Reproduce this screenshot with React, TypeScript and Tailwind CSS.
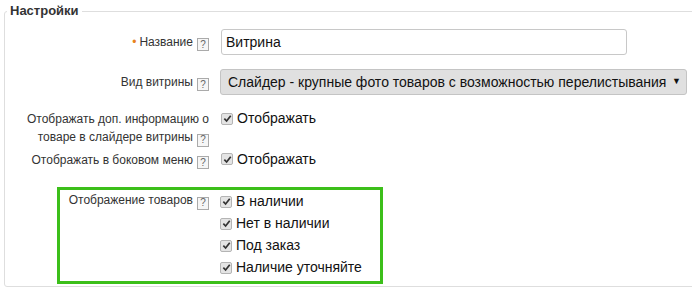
import React from "react";

const Help: React.FC = () => (
  <span className="ml-[4px] inline-flex h-[13px] w-[12px] items-center justify-center border border-[#aaa] bg-[#f6f6f6] align-[-2px] text-[10px] leading-none text-[#666]">
    ?
  </span>
);

const Check: React.FC<{ label: string }> = ({ label }) => (
  <div className="flex h-[19px] items-center whitespace-nowrap">
    <span className="mr-[4px] flex h-[12px] w-[12px] items-center justify-center rounded-[2px] border border-[#b4b4b4] bg-[#e4e4e4]">
      <svg width="9" height="9" viewBox="0 0 10 10">
        <path d="M1.5 5.2 L4 7.8 L8.6 2" fill="none" stroke="#333" strokeWidth="1.9" />
      </svg>
    </span>
    <span className="text-[14px] text-[#111]">{label}</span>
  </div>
);

const Row: React.FC<{ label: React.ReactNode; className?: string; children: React.ReactNode }> = ({
  label,
  className = "",
  children,
}) => (
  <div className={"flex " + className}>
    <div className="w-[204px] shrink-0 whitespace-nowrap text-right text-[12px] leading-[18px] text-[#333]">{label}</div>
    <div className="ml-[12px]">{children}</div>
  </div>
);

export default function App() {
  const items = ["В наличии", "Нет в наличии", "Под заказ", "Наличие уточняйте"];

  return (
    <div className="h-[294px] w-[692px] overflow-hidden bg-white [font-family:'Liberation_Sans',Arial,sans-serif]">
      <fieldset className="ml-[4px] mt-[4px] h-[283px] w-[700px] rounded-[3px] border border-[#dedede] pl-0 pt-0">
        <legend className="ml-[2px] px-[3px] text-[13px] font-bold leading-[14px] text-[#333]">Настройки</legend>

        <Row label={<><span className="mr-[3px] text-[#e8831d]">•</span>Название<Help /></>} className="mt-[11px] items-center">
          <input
            readOnly
            value="Витрина"
            className="h-[26px] w-[406px] rounded-[3px] border border-[#c8c8c8] bg-white px-[4px] text-[14px] text-[#111] outline-none"
          />
        </Row>

        <Row label={<>Вид витрины<Help /></>} className="mt-[14px] items-center">
          <div className="-ml-[1px] flex h-[26px] w-[467px] items-center justify-between whitespace-nowrap rounded-[3px] border border-[#c4c4c4] bg-[#e0e0e0] pl-[7px] pr-[5px] text-[14px] text-[#111]">
            <span>Слайдер - крупные фото товаров с возможностью перелистывания</span>
            <span className="text-[9px]">▼</span>
          </div>
        </Row>

        <Row
          label={<>Отображать доп. информацию о<br />товаре в слайдере витрины<Help /></>}
          className="mt-[15px]"
        >
          <div className="mt-[-1px]"><Check label="Отображать" /></div>
        </Row>

        <Row label={<>Отображать в боковом меню<Help /></>} className="mt-[4px]">
          <div className="mt-[-1px]"><Check label="Отображать" /></div>
        </Row>

        <div className="ml-[52px] mt-[18px] flex h-[97px] w-[326px] border-[3px] border-[#3cbf1a]">
          <div className="w-[149px] shrink-0 whitespace-nowrap pt-[1px] text-right text-[12px] leading-[18px] text-[#333]">
            Отображение товаров<Help />
          </div>
          <div className="ml-[11px] flex flex-col gap-[3px] pt-[2px]">
            {items.map((it) => (
              <Check key={it} label={it} />
            ))}
          </div>
        </div>
      </fieldset>
    </div>
  );
}
